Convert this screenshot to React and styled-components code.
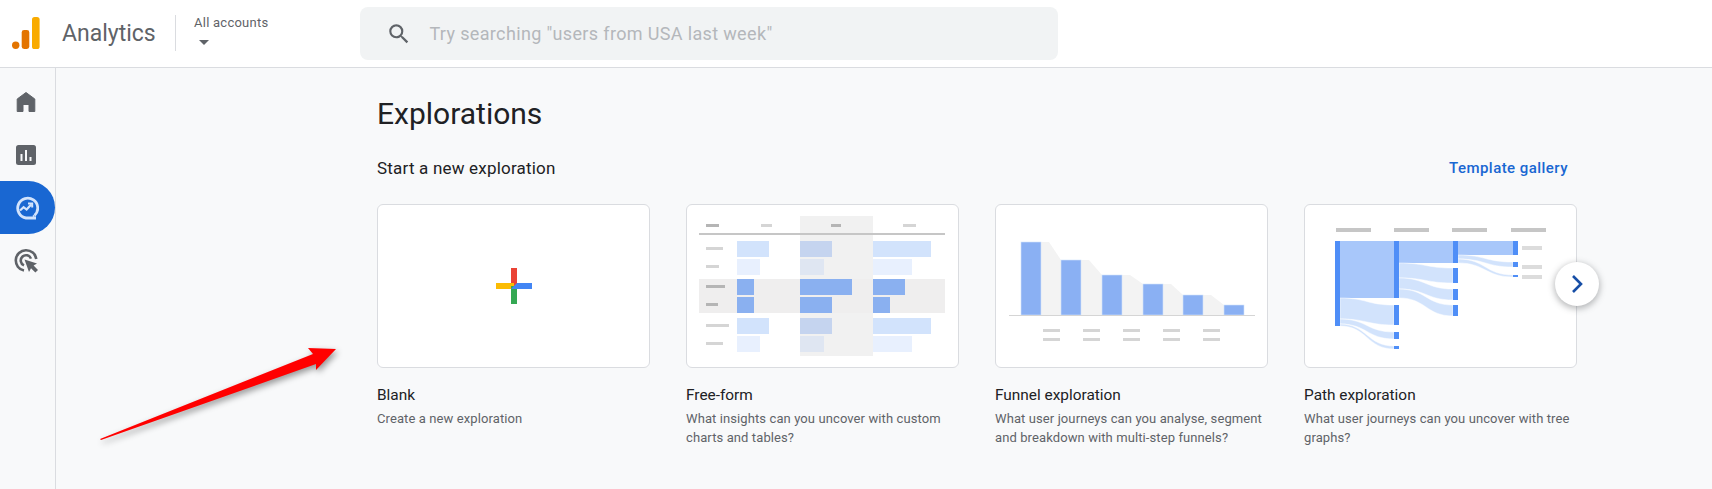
import styled, { createGlobalStyle } from 'styled-components';

const GlobalStyle = createGlobalStyle`
  html, body {
    margin: 0;
    height: 100%;
    overflow: hidden;
    background: #f8f9fa;
    font-family: Roboto, "Liberation Sans", sans-serif;
  }
`;

const Page = styled.div`
  position: relative;
  width: 1712px;
  height: 489px;
  overflow: hidden;
`;

/* top bar */
const Header = styled.header`
  display: flex;
  align-items: center;
  height: 67px;
  background: #fff;
  border-bottom: 1px solid #dadce0;
  padding-left: 12px;
`;

const ProductName = styled.span`
  margin-left: 22px;
  width: 113px;
  font-size: 23px;
  color: #5f6368;
`;

const AccountPicker = styled.div`
  display: flex;
  flex-direction: column;
  align-self: flex-start;
  margin-top: 15px;
  height: 36px;
  padding-left: 18px;
  border-left: 1px solid #dadce0;
  font-size: 13px;
  line-height: 16px;
  letter-spacing: 0.25px;
  color: #5f6368;
`;

const Caret = styled.span`
  width: 0;
  height: 0;
  margin: 9px 0 0 5px;
  border-left: 5px solid transparent;
  border-right: 5px solid transparent;
  border-top: 5px solid #5f6368;
`;

const SearchBox = styled.div`
  display: flex;
  align-items: center;
  width: 698px;
  height: 53px;
  margin-left: 92px;
  padding-left: 26px;
  box-sizing: border-box;
  background: #f1f3f4;
  border-radius: 8px;
`;

const Placeholder = styled.span`
  margin-left: 17px;
  font-size: 18px;
  letter-spacing: 0.35px;
  color: #b4b7bb;
`;

/* left rail */
const Body = styled.div`
  display: flex;
  height: 421px;
`;

const Rail = styled.nav`
  display: flex;
  flex-direction: column;
  width: 55px;
  padding-top: 9px;
  border-right: 1px solid #dadce0;
  flex-shrink: 0;
`;

const RailItem = styled.div`
  display: flex;
  align-items: center;
  justify-content: center;
  width: 51px;
  padding-right: 4px;
  height: 53px;
  margin-top: ${(p) => (p.$first ? '-2px' : '0')};
  color: ${(p) => (p.$active ? '#d2e3fc' : '#5f6368')};
  background: ${(p) => (p.$active ? '#1967d2' : 'transparent')};
  border-radius: 0 27px 27px 0;
`;

/* content */
const Main = styled.main`
  padding: 27px 0 0 321px;
  width: 1200px;
`;

const Title = styled.h1`
  margin: 0;
  font-size: 30px;
  line-height: 38px;
  font-weight: 400;
  color: #202124;
`;

const SectionRow = styled.div`
  display: flex;
  align-items: center;
  justify-content: space-between;
  margin-top: 23px;
  padding-right: 9px;
  height: 24px;
`;

const SectionTitle = styled.h2`
  margin: 0;
  font-size: 17px;
  font-weight: 400;
  letter-spacing: 0.2px;
  color: #202124;
`;

const GalleryLink = styled.a`
  font-size: 15px;
  font-weight: 500;
  letter-spacing: 0.45px;
  color: #1967d2;
`;

const CardRow = styled.div`
  position: relative;
  display: grid;
  grid-template-columns: repeat(4, 273px);
  column-gap: 36px;
  margin-top: 24px;
`;

const Card = styled.article`
  color: #202124;
`;

const Preview = styled.div`
  display: flex;
  align-items: center;
  justify-content: center;
  height: 164px;
  box-sizing: border-box;
  background: #fff;
  border: 1px solid #dadce0;
  border-radius: 6px;
  overflow: hidden;
`;

const CardTitle = styled.h3`
  margin: 17px 0 0;
  font-size: 15.4px;
  line-height: 20px;
  font-weight: 400;
  color: #202124;
`;

const CardText = styled.p`
  margin: 4px 0 0;
  font-size: 13px;
  line-height: 19px;
  letter-spacing: 0.1px;
  color: #5f6368;
`;

const NextButton = styled.button`
  position: absolute;
  top: 58px;
  right: -22px;
  display: flex;
  align-items: center;
  justify-content: center;
  width: 44px;
  height: 44px;
  padding: 0;
  border: none;
  border-radius: 50%;
  background: #fff;
  box-shadow: 0 2px 6px 1px rgba(60, 64, 67, 0.35);
`;

const Arrow = styled.svg`
  position: absolute;
  left: 0;
  top: 0;
  pointer-events: none;
  filter: drop-shadow(2px 3px 3px rgba(0, 0, 0, 0.4));
`;

const Logo = () => (
  <svg width="28" height="33" viewBox="0 0 28 33">
    <circle cx="3.7" cy="28.3" r="3.7" fill="#e37400" />
    <rect x="9.7" y="13" width="7.6" height="19" rx="2.4" fill="#e37400" />
    <rect x="20" y="0" width="7.6" height="32" rx="2.6" fill="#f9ab00" />
  </svg>
);

const SearchIcon = () => (
  <svg width="26" height="26" viewBox="0 0 24 24" fill="#5f6368">
    <path d="M15.5 14h-.79l-.28-.27A6.47 6.47 0 0 0 16 9.5 6.5 6.5 0 1 0 9.5 16c1.61 0 3.09-.59 4.23-1.57l.27.28v.79l5 4.99L20.49 19l-4.99-5zm-6 0C7.01 14 5 11.99 5 9.5S7.01 5 9.5 5 14 7.01 14 9.5 11.99 14 9.5 14z" />
  </svg>
);

const HomeIcon = () => (
  <svg width="24" height="24" viewBox="0 0 24 24" fill="currentColor">
    <path
      d="M12 2.5 20.8 9V21.5H15V14.5H9V21.5H3.2V9Z"
      stroke="currentColor"
      strokeWidth="1"
      strokeLinejoin="round"
    />
  </svg>
);

const ReportsIcon = () => (
  <svg width="24" height="24" viewBox="0 0 24 24">
    <rect x="2" y="2" width="20" height="20" rx="2.5" fill="currentColor" />
    <path d="M6.5 11h2v7h-2zM11 7h2v11h-2zM15.5 14h2v4h-2z" fill="#f8f9fa" />
  </svg>
);

const ExploreIcon = () => (
  <svg width="26" height="26" viewBox="0 0 26 26" fill="none" stroke="currentColor">
    <path d="M21.5 20.5A10 10 0 1 0 13 23h10" strokeWidth="2.8" />
    <path d="M7 15.5l3.6-3.4 3 2.4 4.6-5" strokeWidth="2.2" />
    <path d="M15 8.4h4.2v4.2" strokeWidth="2" />
    <circle cx="20.6" cy="21" r="1" fill="currentColor" stroke="none" />
  </svg>
);

const AdvertisingIcon = () => (
  <svg width="26" height="26" viewBox="0 0 26 26" fill="none" stroke="currentColor">
    <path d="M11 22.6A10.3 10.3 0 1 1 23.3 11" strokeWidth="2.6" />
    <path d="M11 17.4A5.3 5.3 0 1 1 18 10.6" strokeWidth="2.6" />
    <path d="M11.5 11.5 24 15.6 20.6 17.6 25 22 22.4 24.6 18 20.2 16 24Z" fill="currentColor" stroke="none" />
  </svg>
);

const PlusMark = () => (
  <svg width="36" height="36" viewBox="0 0 36 36">
    <rect x="15" y="0" width="6" height="18" fill="#ea4335" />
    <rect x="0" y="15" width="18" height="6" fill="#fbbc04" />
    <rect x="15" y="18" width="6" height="18" fill="#34a853" />
    <path d="M15 21 21 15H36V21Z" fill="#4285f4" />
  </svg>
);

/* free-form table thumbnail */
const tableRows = [
  { y: 37, w: [32, 32, 58], fill: '#d2e3fc', shaded: '#c5d4ef', label: 17 },
  { y: 55, w: [23, 24, 39], fill: '#e8f0fe', shaded: '#dfe6f2', label: 13 },
  { y: 75, w: [17, 52, 32], fill: '#8ab0f0', shaded: '#8ab0f0', label: 19, dark: true },
  { y: 93, w: [17, 32, 17], fill: '#8ab0f0', shaded: '#8ab0f0', label: 12, dark: true },
  { y: 114, w: [32, 32, 58], fill: '#d2e3fc', shaded: '#c5d4ef', label: 23 },
  { y: 132, w: [23, 24, 39], fill: '#e8f0fe', shaded: '#dfe6f2', label: 17 },
];
const tableCols = [51, 114, 187];

const TableThumb = () => (
  <svg width="271" height="162" viewBox="1 1 271 162">
    <rect x="114" y="12" width="73" height="140" fill="#f1f1f1" />
    <rect x="13" y="75" width="246" height="34" fill="#efeeee" />
    <rect x="20" y="20" width="13" height="3" fill="#b5b5b5" />
    <rect x="75" y="20" width="11" height="3" fill="#d5d5d5" />
    <rect x="145" y="20" width="10" height="3" fill="#b5b5b5" />
    <rect x="217" y="20" width="13" height="3" fill="#d5d5d5" />
    <rect x="13" y="29" width="246" height="2" fill="#c6c6c6" />
    {tableRows.map((row) => (
      <g key={row.y}>
        <rect x="20" y={row.y + 6} width={row.label} height="3" fill={row.dark ? '#b5b5b5' : '#d5d5d5'} />
        {tableCols.map((x, i) => (
          <rect key={x} x={x} y={row.y} width={row.w[i]} height="16" fill={i === 1 ? row.shaded : row.fill} />
        ))}
      </g>
    ))}
  </svg>
);

/* funnel thumbnail */
const funnelBars = [
  { x: 26, top: 38 },
  { x: 66, top: 56 },
  { x: 107, top: 71 },
  { x: 148, top: 80 },
  { x: 188, top: 91 },
  { x: 229, top: 101 },
];
const funnelLabels = [48, 88, 128, 168, 208];

const FunnelThumb = () => (
  <svg width="271" height="162" viewBox="1 1 271 162">
    {funnelBars.slice(0, -1).map((bar, i) => {
      const next = funnelBars[i + 1];
      return (
        <path
          key={bar.x}
          d={`M${bar.x + 20} ${bar.top}h8L${next.x} ${next.top}V111H${bar.x + 20}Z`}
          fill="#f3f3f3"
        />
      );
    })}
    {funnelBars.map((bar) => (
      <rect key={bar.x} x={bar.x} y={bar.top} width="20" height={111 - bar.top} fill="#8ab0f3" stroke="#d2e3fc" strokeWidth="0.6" />
    ))}
    <rect x="14" y="111" width="246" height="1" fill="#d5d5d5" />
    {funnelLabels.map((x) => (
      <g key={x} fill="#d5d5d5">
        <rect x={x} y="125" width="17" height="3" />
        <rect x={x} y="134" width="17" height="3" />
      </g>
    ))}
  </svg>
);

/* path thumbnail */
const ribbon = (x0, x1, a0, a1, b0, b1) => {
  const m = (x0 + x1) / 2;
  return `M${x0} ${a0}C${m} ${a0} ${m} ${b0} ${x1} ${b0}V${b1}C${m} ${b1} ${m} ${a1} ${x0} ${a1}Z`;
};

const pathNodes = [
  [31, 37, 85],
  [90, 37, 57], [90, 101, 20], [90, 128, 7], [90, 142, 3],
  [149, 37, 22], [149, 64, 15], [149, 85, 11], [149, 101, 11],
  [209, 37, 14], [209, 58, 5], [209, 71, 2],
];
const pathRibbons = [
  [36, 90, 94, 115, 101, 121],
  [36, 90, 115, 120, 128, 135],
  [36, 90, 120, 122, 142, 145],
  [95, 149, 59, 74, 64, 79],
  [95, 149, 74, 85, 85, 96],
  [95, 149, 85, 94, 101, 112],
  [154, 209, 51, 55, 58, 63],
  [154, 209, 55, 59, 71, 73],
];

const PathThumb = () => (
  <svg width="271" height="162" viewBox="1 1 271 162">
    {[32, 90, 148, 207].map((x) => (
      <rect key={x} x={x} y="24" width="35" height="4" fill="#c6c6c6" />
    ))}
    <rect x="36" y="37" width="54" height="57" fill="#a8c7fa" />
    <rect x="95" y="37" width="54" height="22" fill="#a8c7fa" />
    <rect x="154" y="37" width="55" height="14" fill="#a8c7fa" />
    {pathRibbons.map((r) => (
      <path key={r.join()} d={ribbon(...r)} fill="#d2e3fc" stroke="#fff" strokeWidth="0.5" />
    ))}
    {pathNodes.map(([x, y, h]) => (
      <rect key={`${x}-${y}`} x={x} y={y} width="5" height={h} fill="#4f8ef7" />
    ))}
    <rect x="218" y="42" width="20" height="4" fill="#dcdcdc" />
    <rect x="218" y="61" width="20" height="4" fill="#dcdcdc" />
    <rect x="218" y="71" width="20" height="4" fill="#dcdcdc" />
  </svg>
);

const cards = [
  { title: 'Blank', text: 'Create a new exploration', Thumb: PlusMark },
  {
    title: 'Free-form',
    text: 'What insights can you uncover with custom charts and tables?',
    Thumb: TableThumb,
  },
  {
    title: 'Funnel exploration',
    text: 'What user journeys can you analyse, segment and breakdown with multi-step funnels?',
    Thumb: FunnelThumb,
  },
  {
    title: 'Path exploration',
    text: 'What user journeys can you uncover with tree graphs?',
    Thumb: PathThumb,
  },
];

const App = () => (
  <Page>
    <GlobalStyle />
    <Header>
      <Logo />
      <ProductName>Analytics</ProductName>
      <AccountPicker>
        All accounts
        <Caret />
      </AccountPicker>
      <SearchBox>
        <SearchIcon />
        <Placeholder>Try searching "users from USA last week"</Placeholder>
      </SearchBox>
    </Header>
    <Body>
      <Rail>
        <RailItem $first><HomeIcon /></RailItem>
        <RailItem><ReportsIcon /></RailItem>
        <RailItem $active><ExploreIcon /></RailItem>
        <RailItem><AdvertisingIcon /></RailItem>
      </Rail>
      <Main>
        <Title>Explorations</Title>
        <SectionRow>
          <SectionTitle>Start a new exploration</SectionTitle>
          <GalleryLink>Template gallery</GalleryLink>
        </SectionRow>
        <CardRow>
          {cards.map(({ title, text, Thumb }) => (
            <Card key={title}>
              <Preview><Thumb /></Preview>
              <CardTitle>{title}</CardTitle>
              <CardText>{text}</CardText>
            </Card>
          ))}
          <NextButton aria-label="Next">
            <svg width="14" height="20" viewBox="0 0 14 20" fill="none" stroke="#174ea6" strokeWidth="2.6">
              <path d="M3 2l8 8-8 8" />
            </svg>
          </NextButton>
        </CardRow>
      </Main>
    </Body>
    <Arrow width="400" height="489" viewBox="0 0 400 489">
      <path d="M100 439 313 354 308 348 336 349 316 370 316 364 101 440Z" fill="#ff0000" />
    </Arrow>
  </Page>
);

export default App;
